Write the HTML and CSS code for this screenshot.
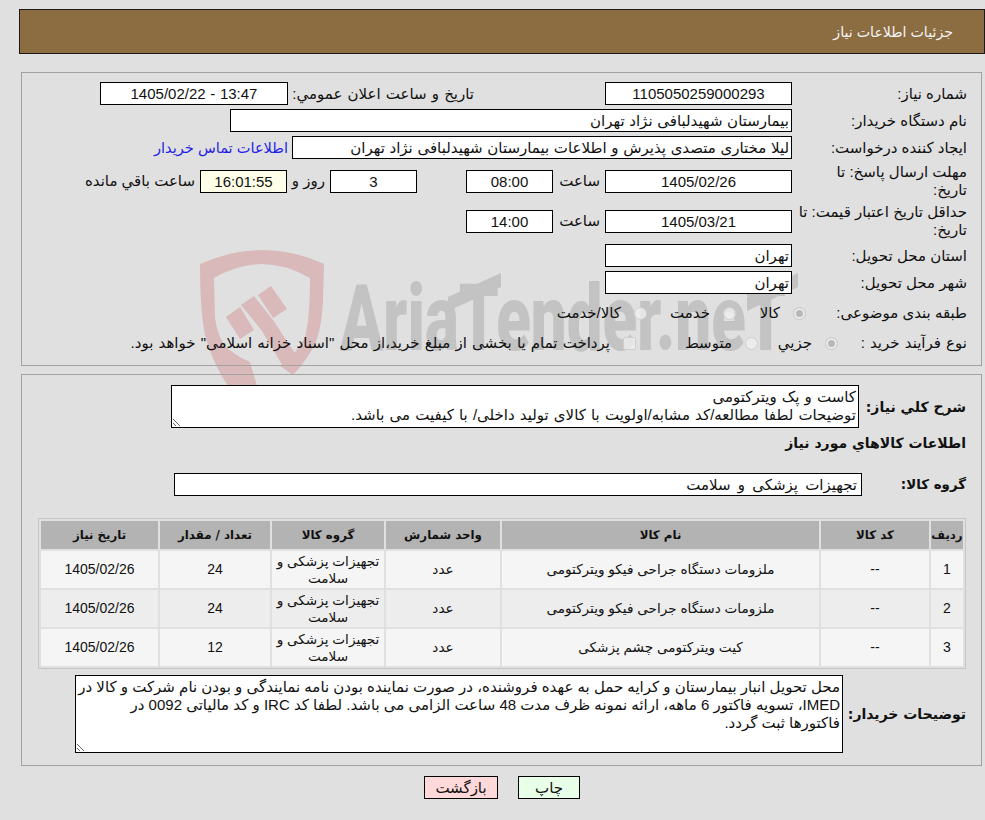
FILE: index.html
```html
<!DOCTYPE html>
<html lang="fa" dir="rtl">
<head>
<meta charset="utf-8">
<title>جزئیات اطلاعات نیاز</title>
<link rel="stylesheet" href="styles.css">
</head>
<body>
<svg class="watermark" viewBox="0 0 985 820" width="985" height="820" aria-hidden="true">
  <g class="wm-shield">
    <path d="M200 264 Q232 250 262 250 Q294 250 324 264 L323 300 Q322 325 316 342 Q306 362 293 375 L280 366 Q298 352 305 337 Q310 318 310 278 Q285 264 262 264 Q238 264 214 278 L215 318 Q218 338 226 347 Q236 356 250 362 L257 386 L228 386 Q212 362 205 335 Q200 310 200 264 Z"/>
    <polygon points="226,317 240,307 254,330 240,339"/>
    <polygon points="241,305 254,296 273,320 296,355 284,368 262,331"/>
    <polygon points="258,295 271,286 287,309 273,318"/>
  </g>
  <text class="wm-text" x="340" y="350" textLength="446" lengthAdjust="spacingAndGlyphs" direction="ltr">AriaTender.neT</text>
  <polygon class="wm-bar" points="448,297 501,273 501,287 448,311"/>
  <polygon class="wm-bar" points="747,297 798,273 798,287 747,311"/>
</svg>

<header class="title-bar">جزئیات اطلاعات نیاز</header>

<section class="panel panel-info">
  <div class="row">
    <span class="lbl">شماره نیاز:</span>
    <span class="field w187 center">1105050259000293</span>
    <span class="public-label">تاریخ و ساعت اعلان عمومي:</span>
    <span class="field w188 center" dir="ltr">1405/02/22 - 13:47</span>
  </div>
  <div class="row">
    <span class="lbl">نام دستگاه خریدار:</span>
    <span class="field w562">بیمارستان شهیدلبافی نژاد تهران</span>
  </div>
  <div class="row">
    <span class="lbl">ایجاد کننده درخواست:</span>
    <span class="field w500">لیلا مختاری متصدی پذیرش و اطلاعات بیمارستان شهیدلبافی نژاد تهران</span>
    <a class="contact" href="#">اطلاعات تماس خریدار</a>
  </div>
  <div class="row row-tall">
    <span class="lbl lbl-narrow">مهلت ارسال پاسخ: تا تاریخ:</span>
    <span class="field w187 center">1405/02/26</span>
    <span class="txt-time">ساعت</span>
    <span class="field w87 center">08:00</span>
    <span class="field w87 center gap-days">3</span>
    <span class="txt-days">روز و</span>
    <span class="field w87 center remain">16:01:55</span>
    <span class="txt-remain">ساعت باقي مانده</span>
  </div>
  <div class="row row-tall">
    <span class="lbl">حداقل تاریخ اعتبار قیمت: تا تاریخ:</span>
    <span class="field w187 center">1405/03/21</span>
    <span class="txt-time">ساعت</span>
    <span class="field w87 center">14:00</span>
  </div>
  <div class="row row-province">
    <span class="lbl">استان محل تحویل:</span>
    <span class="field w187">تهران</span>
  </div>
  <div class="row">
    <span class="lbl">شهر محل تحویل:</span>
    <span class="field w187">تهران</span>
  </div>
  <div class="row row-opts row-subject">
    <span class="lbl lbl-subject">طبقه بندی موضوعی:</span>
    <label class="opt opt-70"><input type="radio" name="subject" disabled checked>کالا</label>
    <label class="opt opt-89"><input type="radio" name="subject" disabled>خدمت</label>
    <label class="opt"><input type="radio" name="subject" disabled>کالا/خدمت</label>
  </div>
  <div class="row row-opts row-process">
    <span class="lbl lbl-process">نوع فرآیند خرید :</span>
    <label class="opt opt-80"><input type="radio" name="process" disabled checked>جزيي</label>
    <label class="opt opt-122"><input type="radio" name="process" disabled>متوسط</label>
    <label class="opt"><input type="checkbox" disabled>پرداخت تمام یا بخشی از مبلغ خرید،از محل "اسناد خزانه اسلامی" خواهد بود.</label>
  </div>
</section>

<section class="panel panel-detail">
  <div class="row">
    <span class="lbl-b w107">شرح کلي نیاز:</span>
    <textarea class="area area-short" readonly>کاست و پک ویترکتومی
توضیحات لطفا مطالعه/کد مشابه/اولویت با کالای تولید داخلی/ با کیفیت می باشد.</textarea>
  </div>
  <h2 class="heading">اطلاعات کالاهاي مورد نیاز</h2>
  <div class="row row-group">
    <span class="lbl-b w104">گروه کالا:</span>
    <span class="field w688">تجهیزات پزشکی و سلامت</span>
  </div>
  <table class="goods">
    <thead>
      <tr>
        <th class="c-idx">ردیف</th><th class="c-code">کد کالا</th><th class="c-name">نام کالا</th><th class="c-unit">واحد شمارش</th><th class="c-group">گروه کالا</th><th class="c-qty">تعداد / مقدار</th><th class="c-date">تاریخ نیاز</th>
      </tr>
    </thead>
    <tbody>
      <tr><td class="num">1</td><td class="num">--</td><td>ملزومات دستگاه جراحی فیکو ویترکتومی</td><td>عدد</td><td>تجهیزات پزشکی و سلامت</td><td class="num">24</td><td class="num">1405/02/26</td></tr>
      <tr><td class="num">2</td><td class="num">--</td><td>ملزومات دستگاه جراحی فیکو ویترکتومی</td><td>عدد</td><td>تجهیزات پزشکی و سلامت</td><td class="num">24</td><td class="num">1405/02/26</td></tr>
      <tr><td class="num">3</td><td class="num">--</td><td>کیت ویترکتومی چشم پزشکی</td><td>عدد</td><td>تجهیزات پزشکی و سلامت</td><td class="num">12</td><td class="num">1405/02/26</td></tr>
    </tbody>
  </table>
  <div class="row row-notes">
    <span class="lbl-b w123">توضیحات خریدار:</span>
    <textarea class="area area-long" readonly>محل تحویل انبار بیمارستان و کرایه حمل به عهده فروشنده، در صورت نماینده بودن نامه نمایندگی و بودن نام شرکت و کالا در IMED، تسویه فاکتور 6 ماهه، ارائه نمونه ظرف مدت 48 ساعت الزامی می باشد. لطفا کد IRC و کد مالیاتی 0092 در فاکتورها ثبت گردد.</textarea>
  </div>
</section>

<div class="actions">
  <button class="btn btn-print" type="button">چاپ</button>
  <button class="btn btn-back" type="button">بازگشت</button>
</div>
</body>
</html>
```
FILE: styles.css
```css
* { box-sizing: border-box; }
html, body { margin: 0; padding: 0; }
body {
  position: relative;
  width: 985px;
  height: 820px;
  overflow: hidden;
  background: #e0e0e0;
  color: #111;
  font-family: "Liberation Sans", "DejaVu Sans", sans-serif;
  font-size: 15px;
  line-height: 18px;
}
.watermark { position: absolute; left: 0; top: 0; direction: ltr; }
.wm-shield { fill: #d9b9b9; }
.wm-text { font-family: Roboto, sans-serif; font-weight: 900; font-size: 92px; fill: #c3c3c3; }
.wm-bar { fill: #c3c3c3; }

.title-bar {
  position: relative;
  margin: 9px 0 0 19px;
  height: 45px;
  padding: 0 31px 0 0;
  display: flex;
  align-items: center;
  background: #8c6d42;
  border: 1px solid #1a1a1a;
  color: #f4f4f4;
  font-size: 14.2px;
}

.panel {
  position: relative;
  margin: 0 3px 0 21px;
  border: 1px solid #a2a2a2;
}
.panel-info { margin-top: 18px; height: 294px; padding: 9px 14px 0 0; }
.panel-detail { margin-top: 8px; height: 392px; padding: 10px 15px 0 16px; }

.row { display: flex; align-items: center; min-height: 23px; margin-bottom: 4px; }
.lbl { width: 175px; flex: none; line-height: 18px; }
.lbl-narrow { padding-left: 30px; }
.lbl-b { flex: none; font-family: "DejaVu Sans", sans-serif; font-weight: 700; font-size: 14px; }
.w107 { width: 107px; }
.w104 { width: 104px; font-size: 13.4px; }
.w123 { width: 123px; }

.field {
  flex: none;
  height: 23px;
  padding: 0 2px;
  background: #fff;
  border: 1px solid #000;
  line-height: 21px;
  word-spacing: .5px;
  white-space: nowrap;
  overflow: hidden;
}
.center { text-align: center; }
.w87 { width: 87px; }
.w187 { width: 187px; }
.w188 { width: 188px; }
.w500 { width: 500px; }
.w562 { width: 562px; }
.w688 { width: 688px; padding-right: 4px; word-spacing: 3px; }
.remain { background: #ffffe9; }

.public-label { width: 182px; margin-right: 131px; margin-left: 4px; flex: none; white-space: nowrap; word-spacing: 1px; }
.contact { margin-right: 4px; color: #1f1fe6; font-size: 14.6px; text-decoration: none; white-space: nowrap; }
.txt-time { width: 52px; padding-right: 5px; flex: none; }
.gap-days { margin-right: 49px; }
.txt-days { width: 43px; padding-right: 5px; flex: none; white-space: nowrap; }
.txt-remain { padding-right: 5px; white-space: nowrap; }

.row-tall { height: 36px; }
.row-province { margin-top: 5px; }
.row-opts { height: 24px; margin-bottom: 0; }
.row-subject { margin-top: 7px; }
.row-process { margin-top: 6px; word-spacing: 1px; }
.lbl-subject { width: 161px; }
.lbl-process { width: 129px; }

.opt { display: flex; align-items: center; gap: 13px; flex: none; white-space: nowrap; }
.opt-70 { width: 70px; }
.opt-80 { width: 80px; }
.opt-89 { width: 89px; }
.opt-122 { width: 122px; }
.opt input {
  appearance: none;
  flex: none;
  width: 13px;
  height: 13px;
  margin: 0;
  background: rgba(240, 240, 240, .75);
  border: 1px solid #cfcfcf;
}
.opt input[type="radio"] { border-radius: 50%; }
.opt input[type="checkbox"] { border-radius: 2px; }
.opt input:checked { background: #b8b8b8; box-shadow: inset 0 0 0 2px #ececec; }

.area {
  display: block;
  flex: none;
  margin: 0;
  padding: 2px 2px 1px;
  border: 1px solid #000;
  border-radius: 0;
  background: #fff;
  color: #111;
  font: inherit;
  line-height: 18px;
  overflow: hidden;
  outline: none;
}
.area-short { width: 688px; height: 43px; word-spacing: 1px; }
.area-long { width: 768px; height: 78px; }

.heading { margin: 5px 0 0; height: 20px; font-family: "DejaVu Sans", sans-serif; font-size: 14px; line-height: 20px; font-weight: 700; }
.row-group { margin-top: 20px; margin-bottom: 0; }

.goods {
  width: 928px;
  margin-top: 22px;
  table-layout: fixed;
  border-collapse: separate;
  border-spacing: 2px;
  border: 1px solid #c6c6c6;
}
.goods th {
  height: 28px;
  padding: 0;
  background: #b3b3b3;
  font-family: "DejaVu Sans", sans-serif;
  font-size: 11.8px;
  font-weight: 700;
}
.goods td {
  height: 37px;
  padding: 0 2px;
  background: #f5f5f5;
  font-size: 13.6px;
  text-align: center;
  line-height: 17px;
}
.goods td.num { font-size: 14px; }
.goods tbody tr:nth-child(2) td { background: #ededed; }
.c-idx { width: 32px; }
.c-code { width: 108px; }
.c-name { width: 317px; }
.c-unit { width: 114px; }
.c-group { width: 112px; }
.c-qty { width: 110px; }
.c-date { width: 117px; }

.row-notes { margin: 6px 0 0; }

.actions { display: flex; gap: 20px; margin-top: 10px; padding-right: 405px; }
.btn {
  height: 23px;
  padding: 0;
  border: 1px solid #000;
  border-radius: 0;
  color: #111;
  font: inherit;
}
.btn-print { width: 62px; background: #e8ffe8; }
.btn-back { width: 74px; background: #ffd9d9; }
```
